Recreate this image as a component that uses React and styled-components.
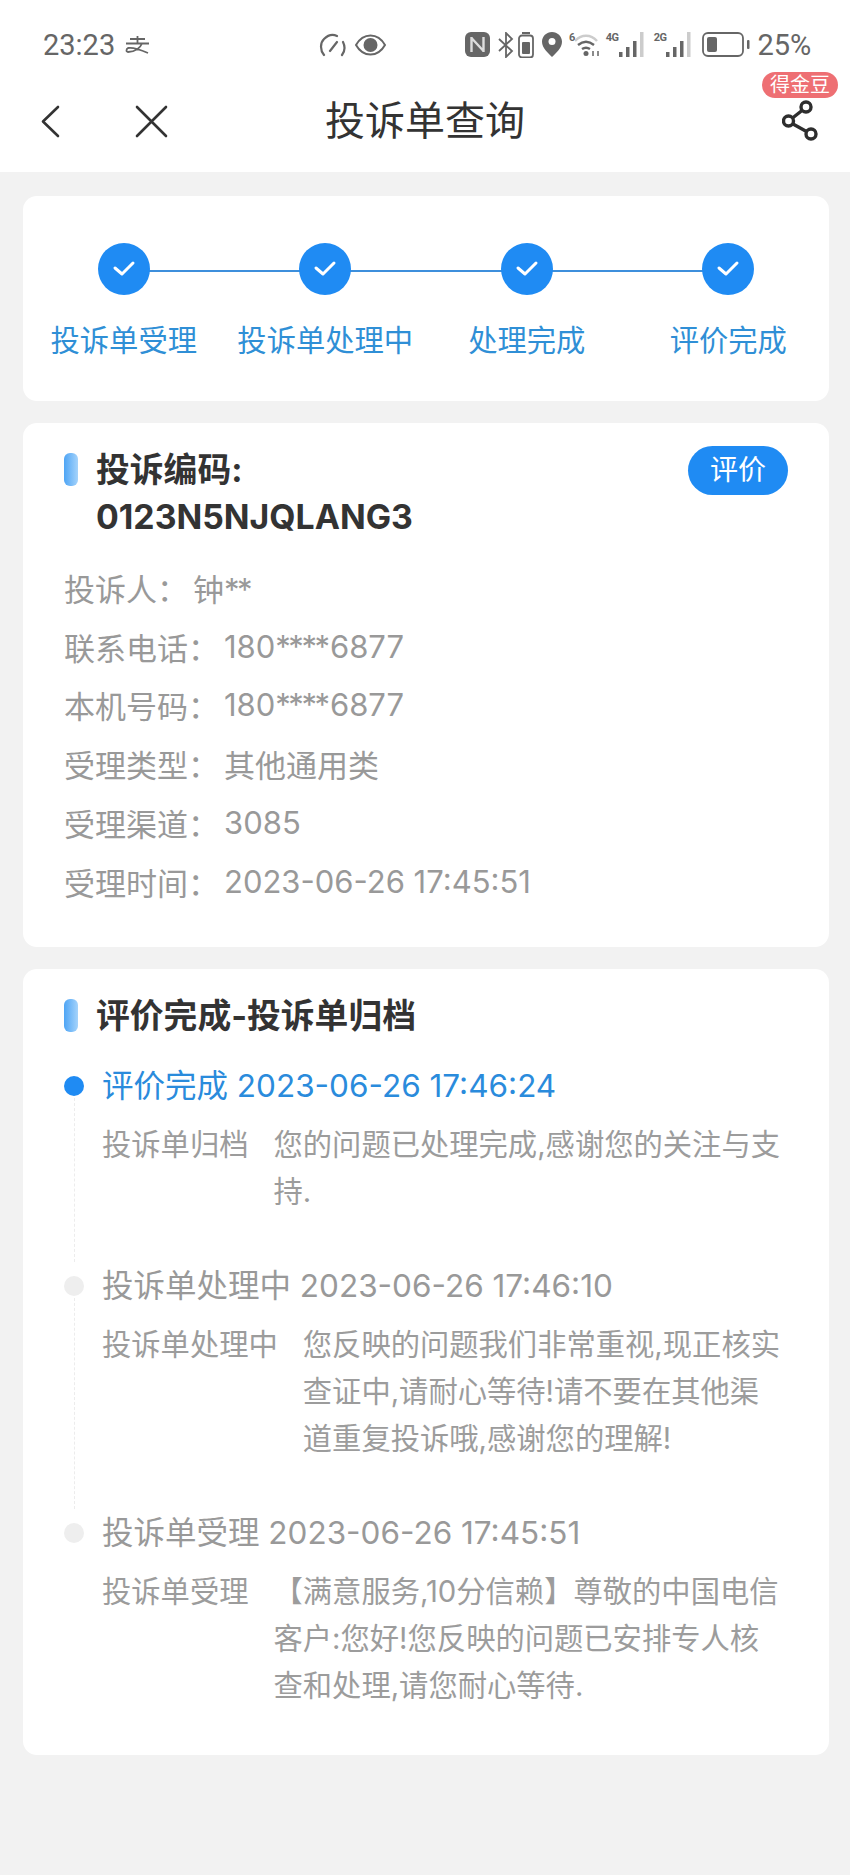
import styled, { createGlobalStyle } from 'styled-components';

const steps = ['投诉单受理', '投诉单处理中', '处理完成', '评价完成'];

const infoRows = [
  ['投诉人：', '钟**'],
  ['联系电话：', '180****6877'],
  ['本机号码：', '180****6877'],
  ['受理类型：', '其他通用类'],
  ['受理渠道：', '3085'],
  ['受理时间：', '2023-06-26 17:45:51'],
];

const timeline = [
  {
    title: '评价完成 2023-06-26 17:46:24',
    label: '投诉单归档',
    text: '您的问题已处理完成,感谢您的关注与支持.',
    active: true,
  },
  {
    title: '投诉单处理中 2023-06-26 17:46:10',
    label: '投诉单处理中',
    text: '您反映的问题我们非常重视,现正核实查证中,请耐心等待!请不要在其他渠道重复投诉哦,感谢您的理解!',
  },
  {
    title: '投诉单受理 2023-06-26 17:45:51',
    label: '投诉单受理',
    text: '【满意服务,10分信赖】尊敬的中国电信客户:您好!您反映的问题已安排专人核查和处理,请您耐心等待.',
    last: true,
  },
];

export default function App() {
  return (
    <>
      <GlobalStyle />
      <Page>
        <TopArea>
          <StatusBar>
            <StatusLeft>
              <Clock>23:23</Clock>
              <svg width="25" height="20" viewBox="0 0 25 20" fill="none" stroke="#666" strokeWidth="1.8">
                <path d="M5 4h15M12.500 1v7M1 8.500h23M17 8.500c-2 5-7 8-14 8.500-2 0-2-3 0-4 5-1 13 2 20 5" />
              </svg>
            </StatusLeft>
            <StatusMiddle>
              <svg width="28" height="24" viewBox="0 0 28 24" fill="none" stroke="#666" strokeWidth="2.2" strokeLinecap="round">
                <path d="M5 22C1 17 1 10 5 6c4-4 9-5 13-3M24 9c2 4 2 9-1 13M11 18l7-9" />
              </svg>
              <svg width="31" height="22" viewBox="0 0 31 22">
                <path d="M1 11C5 4 10 1.500 15.500 1.500S26 4 30 11c-4 7-9 9.500-14.500 9.500S5 18 1 11z" fill="none" stroke="#666" strokeWidth="2" />
                <circle cx="15.500" cy="11" r="7" fill="#666" />
              </svg>
            </StatusMiddle>
            <StatusRight>
              <IconSlot>
                <svg width="25" height="25" viewBox="0 0 25 25">
                  <rect width="25" height="25" rx="6" fill="#666" />
                  <path d="M6.500 5v15M18.500 5v15M6.500 6l12 13" fill="none" stroke="#ddd" strokeWidth="2.400" />
                </svg>
              </IconSlot>
              <IconSlot $left={8}>
                <svg width="16" height="26" viewBox="0 0 16 26" fill="none" stroke="#666" strokeWidth="1.800">
                  <path d="M1 7l13 12-6 6V1l6 6L1 19" />
                </svg>
              </IconSlot>
              <IconSlot $left={4}>
                <svg width="16" height="26" viewBox="0 0 16 26">
                  <rect x="1" y="3.500" width="14" height="22" rx="3" fill="none" stroke="#666" strokeWidth="1.800" />
                  <rect x="4" y="0" width="8" height="2" fill="#666" />
                  <rect x="4" y="10" width="8" height="12" rx="1" fill="#666" />
                </svg>
              </IconSlot>
              <IconSlot $left={8}>
                <svg width="20" height="25" viewBox="0 0 20 25">
                  <path d="M10 0C4.500 0 0 4.300 0 9.800 0 16 6 21 10 25c4-4 10-9 10-15.200C20 4.300 15.500 0 10 0z" fill="#666" />
                  <circle cx="10" cy="9.500" r="3.500" fill="#fff" />
                </svg>
              </IconSlot>
              <IconSlot $left={7}>
                <TinyMark>6</TinyMark>
                <svg width="25" height="25" viewBox="0 0 25 25" fill="none" strokeWidth="2.400">
                  <path d="M0 9C6 2 16 2 22 9" stroke="#ccc" />
                  <path d="M3 13c5-4 11-4 16 0M7 17c3-2 5-2 8 0" stroke="#666" />
                  <circle cx="11" cy="21.500" r="2.500" fill="#666" />
                  <path d="M18 24v-5M23 19v5" stroke="#666" strokeWidth="1.500" />
                </svg>
              </IconSlot>
              <IconSlot $left={6}>
                <TinyMark>4G</TinyMark>
                <SignalBars />
              </IconSlot>
              <IconSlot $left={10}>
                <TinyMark>2G</TinyMark>
                <SignalBars />
              </IconSlot>
              <IconSlot $left={11}>
                <svg width="48" height="25" viewBox="0 0 48 25">
                  <rect x="1" y="1" width="40" height="23" rx="5" fill="none" stroke="#666" strokeWidth="1.800" />
                  <rect x="5" y="5" width="10" height="15" rx="2" fill="#666" />
                  <rect x="45" y="8" width="2.500" height="9" rx="1" fill="#666" />
                </svg>
              </IconSlot>
              <Battery>25%</Battery>
            </StatusRight>
          </StatusBar>
          <NavBar>
            <NavLeft>
              <svg width="20" height="33" viewBox="0 0 20 33" fill="none" stroke="#333" strokeWidth="2.600" strokeLinecap="round" strokeLinejoin="round">
                <path d="M18 2L3 16.500 18 31" />
              </svg>
              <svg width="33" height="33" viewBox="0 0 33 33" fill="none" stroke="#333" strokeWidth="2.600" strokeLinecap="round">
                <path d="M2 2l29 29M31 2L2 31" />
              </svg>
            </NavLeft>
            <NavTitle>投诉单查询</NavTitle>
            <ShareWrap>
              <Badge>得金豆</Badge>
              <svg width="36" height="42" viewBox="0 0 36 42" fill="none" stroke="#2e2e2e" strokeWidth="3.400">
                <circle cx="24" cy="7" r="5" />
                <circle cx="6.500" cy="21" r="5" />
                <circle cx="29" cy="34" r="5" />
                <path d="M20 10.500L10.500 18M11 24l13.500 7.500" />
              </svg>
            </ShareWrap>
          </NavBar>
        </TopArea>

        <Content>
          <StepsCard>
            {steps.map((step, i) => (
              <Step key={step} $first={i === 0} $last={i === steps.length - 1}>
                <StepCircle>
                  <svg width="24" height="18" viewBox="0 0 24 18" fill="none" stroke="#fff" strokeWidth="3" strokeLinecap="round" strokeLinejoin="round">
                    <path d="M3 8l7 6L21 3" />
                  </svg>
                </StepCircle>
                <StepLabel>{step}</StepLabel>
              </Step>
            ))}
          </StepsCard>

          <InfoCard>
            <CardHeading>
              <Marker />
              <HeadingText>
                投诉编码:
                <br />
                0123N5NJQLANG3
              </HeadingText>
              <RateButton>评价</RateButton>
            </CardHeading>
            <InfoList>
              {infoRows.map(([label, value]) => (
                <InfoRow key={label}>
                  <InfoLabel>{label}</InfoLabel>
                  <span>
                    {value.split(/(\*+)/).map((part, i) =>
                      part.startsWith('*') ? <Stars key={i}>{part}</Stars> : part
                    )}
                  </span>
                </InfoRow>
              ))}
            </InfoList>
          </InfoCard>

          <TimelineCard>
            <CardHeading>
              <Marker />
              <HeadingText>评价完成-投诉单归档</HeadingText>
            </CardHeading>
            <TimelineList>
              {timeline.map((item) => (
                <TimelineItem key={item.title}>
                  <Rail>
                    <Dot $active={item.active} />
                    {!item.last && <RailLine />}
                  </Rail>
                  <TimelineBody $last={item.last}>
                    <TimelineTitle $active={item.active}>{item.title}</TimelineTitle>
                    <TimelineDesc>
                      <DescLabel>{item.label}</DescLabel>
                      <DescText>{item.text}</DescText>
                    </TimelineDesc>
                  </TimelineBody>
                </TimelineItem>
              ))}
            </TimelineList>
          </TimelineCard>
        </Content>
      </Page>
    </>
  );
}

function SignalBars() {
  return (
    <svg width="25" height="25" viewBox="0 0 25 25">
      <rect x="0" y="20" width="3.500" height="5" fill="#666" />
      <rect x="7" y="15" width="3.500" height="10" fill="#666" />
      <rect x="14" y="9" width="3.500" height="16" fill="#666" />
      <rect x="21" y="0" width="3.500" height="25" fill="#ccc" />
    </svg>
  );
}

const GlobalStyle = createGlobalStyle`
  html, body {
    margin: 0;
    background: #f2f2f2;
  }
  * {
    box-sizing: border-box;
  }
`;

const Page = styled.div`
  width: 850px;
  min-height: 1875px;
  background: #f2f2f2;
  font-family: 'Inter', 'Noto Sans CJK SC', sans-serif;
`;

const TopArea = styled.div`
  background: #fff;
  height: 172px;
`;

const StatusBar = styled.div`
  display: flex;
  align-items: center;
  height: 76px;
  padding: 14px 0 0 43px;
  color: #666;
`;

const StatusLeft = styled.div`
  display: flex;
  align-items: center;
  gap: 10px;
  width: 276px;
`;

const Clock = styled.span`
  font-family: 'Roboto', sans-serif;
  font-size: 29px;
`;

const StatusMiddle = styled.div`
  display: flex;
  align-items: center;
  gap: 8px;
  width: 146px;
`;

const StatusRight = styled.div`
  display: flex;
  align-items: center;
`;

const IconSlot = styled.div`
  display: flex;
  align-items: flex-start;
  height: 26px;
  margin-left: ${(p) => p.$left || 0}px;
`;

const TinyMark = styled.span`
  font-family: 'Roboto', sans-serif;
  font-size: 11px;
  font-weight: 700;
  line-height: 12px;
  letter-spacing: -0.5px;
`;

const Battery = styled.span`
  font-family: 'Roboto', sans-serif;
  font-size: 29px;
  margin-left: 7px;
`;

const NavBar = styled.div`
  position: relative;
  display: flex;
  align-items: center;
  justify-content: space-between;
  height: 90px;
  padding: 0 32px 0 40px;
`;

const NavLeft = styled.div`
  display: flex;
  align-items: center;
  gap: 75px;
`;

const NavTitle = styled.div`
  position: absolute;
  left: 0;
  right: 0;
  text-align: center;
  font-size: 40px;
  line-height: 56px;
  color: #333;
`;

const ShareWrap = styled.div`
  position: relative;
  display: flex;
`;

const Badge = styled.div`
  position: absolute;
  top: -28px;
  right: -20px;
  width: 76px;
  height: 26px;
  border-radius: 13px;
  background: #ee6f73;
  color: #fff;
  font-size: 20px;
  line-height: 26px;
  text-align: center;
`;

const Content = styled.div`
  display: flex;
  flex-direction: column;
  gap: 22px;
  padding: 24px 21px 0 23px;
`;

const Card = styled.div`
  background: #fff;
  border-radius: 14px;
`;

const StepsCard = styled(Card)`
  display: grid;
  grid-template-columns: repeat(4, 1fr);
  height: 205px;
  padding-top: 47px;
`;

const Step = styled.div`
  position: relative;
  display: flex;
  flex-direction: column;
  align-items: center;

  &::before {
    content: '';
    position: absolute;
    top: 27px;
    left: ${(p) => (p.$first ? '50%' : '0')};
    right: ${(p) => (p.$last ? '50%' : '0')};
    height: 2px;
    background: #3d8fdc;
  }
`;

const StepCircle = styled.div`
  position: relative;
  display: flex;
  align-items: center;
  justify-content: center;
  width: 52px;
  height: 52px;
  border-radius: 50%;
  background: #1f8bf3;
`;

const StepLabel = styled.div`
  margin-top: 24px;
  font-size: 29.300px;
  line-height: 44px;
  color: #2f8fd6;
  white-space: nowrap;
`;

const InfoCard = styled(Card)`
  height: 524px;
  padding: 23px 41px 0;
`;

const CardHeading = styled.div`
  position: relative;
  display: flex;
  align-items: flex-start;
`;

const Marker = styled.div`
  flex: none;
  width: 14px;
  height: 33px;
  margin: 7px 18px 0 0;
  border-radius: 6px;
  background: linear-gradient(90deg, #4ea5f5, #a5d3fb);
`;

const HeadingText = styled.div`
  font-size: 33.800px;
  font-weight: 700;
  line-height: 47px;
  color: #333;
`;

const RateButton = styled.div`
  position: absolute;
  top: 0;
  right: 0;
  width: 100px;
  height: 49px;
  border-radius: 25px;
  background: #1f8bf3;
  color: #fff;
  font-size: 28px;
  line-height: 49px;
  text-align: center;
`;

const InfoList = styled.div`
  margin-top: 18px;
`;

const InfoRow = styled.div`
  display: flex;
  height: 58.800px;
  align-items: center;
  font-size: 31px;
  color: #999;
`;

const InfoLabel = styled.span`
  margin-right: 5px;
`;

const Stars = styled.span`
  letter-spacing: -2.500px;
  margin-right: 2.500px;
`;

const TimelineCard = styled(Card)`
  height: 786px;
  padding: 23px 43px 0 41px;
`;

const TimelineList = styled.div`
  margin-top: 23px;
`;

const TimelineItem = styled.div`
  display: grid;
  grid-template-columns: 38px 1fr;
`;

const Rail = styled.div`
  display: flex;
  flex-direction: column;
  align-items: center;
  width: 20px;
  padding-top: 14px;
`;

const Dot = styled.div`
  flex: none;
  width: 20px;
  height: 20px;
  border-radius: 50%;
  background: ${(p) => (p.$active ? '#1f8bf3' : '#eeeeee')};
`;

const RailLine = styled.div`
  flex: 1;
  margin-top: 2px;
  border-left: 1px dashed #ececec;
`;

const TimelineBody = styled.div`
  padding-bottom: ${(p) => (p.$last ? '0' : '47px')};
`;

const TimelineTitle = styled.div`
  font-size: 31.500px;
  line-height: 47px;
  color: ${(p) => (p.$active ? '#2a8bdc' : '#999')};
  white-space: nowrap;
`;

const TimelineDesc = styled.div`
  display: flex;
  gap: 25px;
  margin-top: 12px;
  font-size: 29.300px;
  line-height: 47px;
  color: #9c9c9c;
`;

const DescLabel = styled.div`
  flex: none;
`;

const DescText = styled.div`
  flex: 1;
`;
